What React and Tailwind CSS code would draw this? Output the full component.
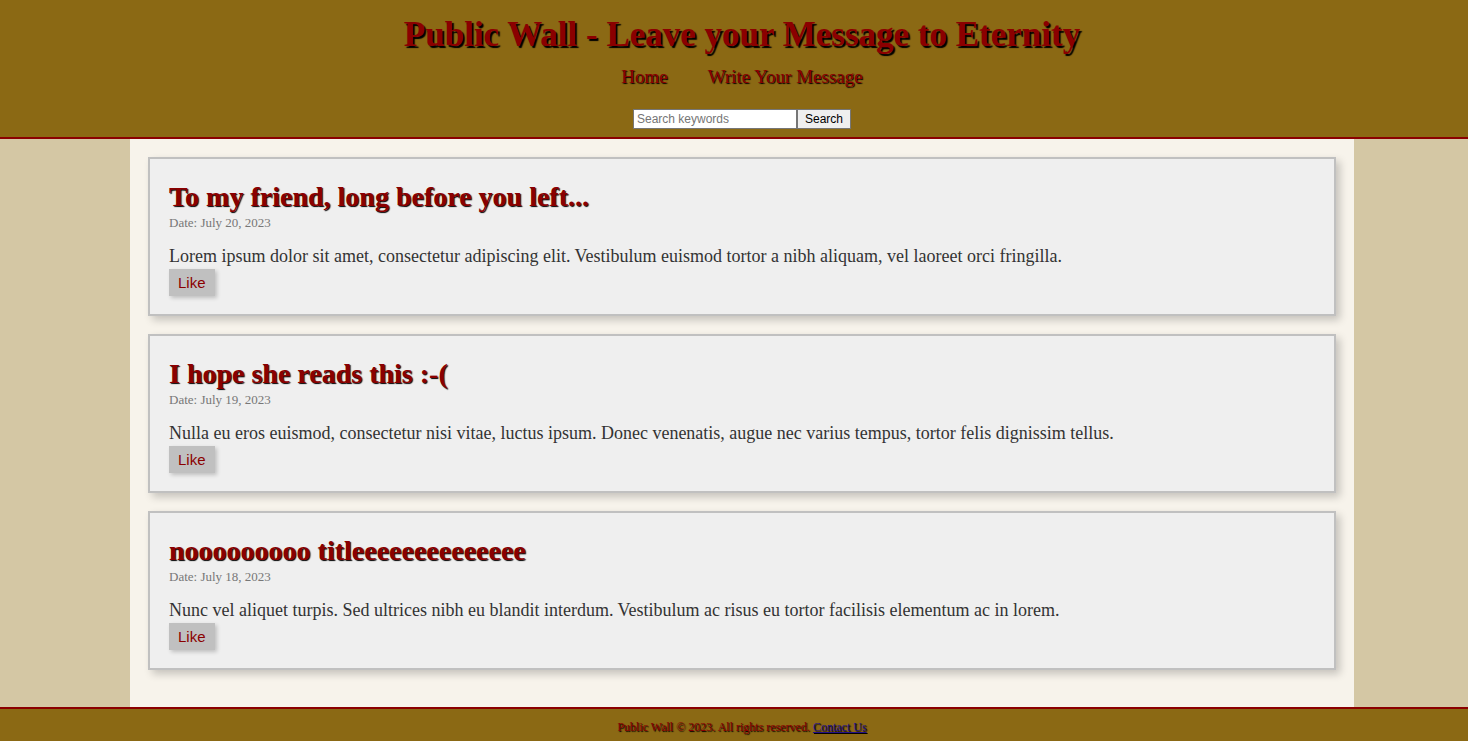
const messages = [
  {
    title: 'To my friend, long before you left...',
    date: 'July 20, 2023',
    text: 'Lorem ipsum dolor sit amet, consectetur adipiscing elit. Vestibulum euismod tortor a nibh aliquam, vel laoreet orci fringilla.',
  },
  {
    title: 'I hope she reads this :-(',
    date: 'July 19, 2023',
    text: 'Nulla eu eros euismod, consectetur nisi vitae, luctus ipsum. Donec venenatis, augue nec varius tempus, tortor felis dignissim tellus.',
  },
  {
    title: 'nooooooooo titleeeeeeeeeeeeee',
    date: 'July 18, 2023',
    text: 'Nunc vel aliquet turpis. Sed ultrices nibh eu blandit interdum. Vestibulum ac risus eu tortor facilisis elementum ac in lorem.',
  },
];

function Header() {
  return (
    <header className="flex flex-col items-center border-b-2 border-[#8b0000] bg-[#8b6914] pt-[13px] pb-2 pl-4 text-[#8b0000]">
      <h1 className="text-[35px] leading-[44px] font-bold [text-shadow:2px_2px_1px_#000]">
        Public Wall - Leave your Message to Eternity
      </h1>
      <nav className="mt-2 flex gap-10 text-[19px] leading-6 [text-shadow:1px_1px_1px_#000]">
        <a href="#home">Home</a>
        <a href="#write">Write Your Message</a>
      </nav>
      <form
        className="mt-5 flex font-['Liberation_Sans',Arial,sans-serif] text-[12px]"
        onSubmit={(e) => e.preventDefault()}
      >
        <input
          type="text"
          aria-label="Search keywords"
          placeholder="Search keywords"
          className="h-5 w-[164px] border border-[#767676] bg-white px-[3px] text-black placeholder:text-[#757575]"
        />
        <button type="submit" className="h-5 border border-[#767676] bg-[#efefef] px-[7px] leading-4 text-black">
          Search
        </button>
      </form>
    </header>
  );
}

function Message({ title, date, text }) {
  return (
    <article className="border-2 border-[#c0c0c0] bg-[#efefef] px-[19px] py-[18px] shadow-[4px_4px_8px_rgba(0,0,0,0.2)]">
      <h2 className="mt-0.5 text-[28px] leading-9 font-bold text-[#8b0000] [text-shadow:1px_1px_1px_#000]">{title}</h2>
      <p className="text-[13px] leading-4 text-[#777]">Date: {date}</p>
      <p className="mt-3 text-[18px] leading-[26px] text-[#333]">{text}</p>
      <button
        type="button"
        className="block h-[27px] bg-[#c0c0c0] px-[9px] font-['Liberation_Sans',Arial,sans-serif] text-[15px] leading-5 text-[#8b0000] shadow-[2px_2px_4px_rgba(0,0,0,0.2)]"
      >
        Like
      </button>
    </article>
  );
}

export default function App() {
  return (
    <div className="flex min-h-screen flex-col bg-[#d4c7a4] font-['Liberation_Serif','Times_New_Roman',serif]">
      <Header />
      <div className="flex flex-1 justify-center pl-4">
        <main className="flex w-full max-w-[1224px] flex-col gap-[18px] bg-[#f7f3eb] p-[18px]">
          {messages.map((m) => (
            <Message key={m.date} {...m} />
          ))}
        </main>
      </div>
      <footer className="border-t-2 border-[#8b0000] bg-[#8b6914] pt-2.5 pb-1.5 pl-4 text-center text-[12px] leading-4 text-[#8b0000] [text-shadow:1px_1px_1px_#000]">
        Public Wall © 2023. All rights reserved.{' '}
        <a href="#contact" className="text-[#24108a] underline">
          Contact Us
        </a>
      </footer>
    </div>
  );
}
